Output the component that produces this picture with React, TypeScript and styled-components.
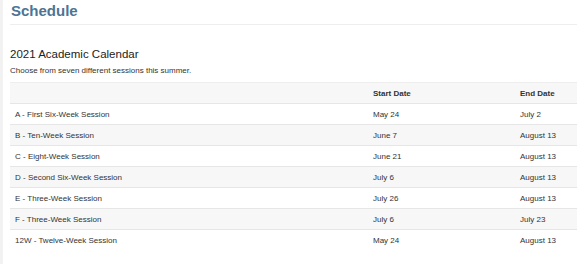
import React from 'react';
import styled, {createGlobalStyle} from 'styled-components';

const GlobalStyle = createGlobalStyle`
  html, body {
    margin: 0;
    padding: 0;
    background: #fff;
  }
  body {
    font-family: "Liberation Sans", Arial, sans-serif;
    color: #222;
  }
`

const Page = styled.div`
  display: flex;
  min-height: 264px;
`

const SideRail = styled.div`
  width: 3px;
  flex-shrink: 0;
  background: #f2f2f2;
`

const Content = styled.main`
  flex: 1;
  padding-left: 7px;
`

const PageTitle = styled.h1`
  margin: 0;
  padding: 2px 0 5px 1px;
  font-size: 15px;
  font-weight: bold;
  line-height: 17px;
  color: #4d7494;
  border-bottom: 1px solid #eeeeee;
`

const SectionTitle = styled.h2`
  margin: 22px 0 0;
  font-size: 11.5px;
  font-weight: normal;
  line-height: 14px;
  color: #222;
`

const Lead = styled.p`
  margin: 5px 0 0;
  font-size: 8px;
  line-height: 9px;
  color: #333;
`

const Table = styled.table`
  width: 100%;
  margin-top: 7px;
  border-collapse: collapse;
  font-size: 8px;
  color: #333;
`

const HeadCell = styled.th<{ $w?: number }>`
  width: ${p => (p.$w ? `${p.$w}px` : 'auto')};
  height: 20px;
  padding: 0 5px;
  text-align: left;
  font-weight: bold;
  background: #f7f7f7;
  border-top: 1px solid #eeeeee;
`

const Row = styled.tr<{ $shaded: boolean }>`
  background: ${p => (p.$shaded ? '#f7f7f7' : '#fff')};
  border-top: 1px solid #e6e6e6;
`

const Cell = styled.td`
  height: 20px;
  padding: 0 5px;
`

const sessions = [
    ['A - First Six-Week Session', 'May 24', 'July 2'],
    ['B - Ten-Week Session', 'June 7', 'August 13'],
    ['C - Eight-Week Session', 'June 21', 'August 13'],
    ['D - Second Six-Week Session', 'July 6', 'August 13'],
    ['E - Three-Week Session', 'July 26', 'August 13'],
    ['F - Three-Week Session', 'July 6', 'July 23'],
    ['12W - Twelve-Week Session', 'May 24', 'August 13'],
];

function App() {
    return (
        <>
            <GlobalStyle/>
            <Page>
                <SideRail/>
                <Content>
                    <PageTitle>Schedule</PageTitle>
                    <SectionTitle>2021 Academic Calendar</SectionTitle>
                    <Lead>Choose from seven different sessions this summer.</Lead>
                    <Table>
                        <thead>
                            <tr>
                                <HeadCell/>
                                <HeadCell $w={137}>Start Date</HeadCell>
                                <HeadCell $w={52}>End Date</HeadCell>
                            </tr>
                        </thead>
                        <tbody>
                            {sessions.map(([name, start, end], i) => (
                                <Row key={name} $shaded={i % 2 === 1}>
                                    <Cell>{name}</Cell>
                                    <Cell>{start}</Cell>
                                    <Cell>{end}</Cell>
                                </Row>
                            ))}
                        </tbody>
                    </Table>
                </Content>
            </Page>
        </>
    );
}

export default App;
